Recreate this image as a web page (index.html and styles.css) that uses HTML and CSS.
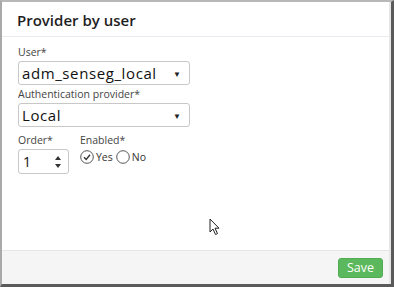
FILE: index.html
```html
<!DOCTYPE html>
<html>
<head>
<meta charset="utf-8">
<link rel="stylesheet" href="styles.css">
</head>
<body>
<div class="frame">
  <div class="modal">
    <div class="header">Provider by user</div>
    <div class="body">
      <div class="field">
        <label class="lbl">User*</label>
        <div class="select wide"><span>adm_senseg_local</span><span class="caret">▼</span></div>
      </div>
      <div class="field">
        <label class="lbl">Authentication provider*</label>
        <div class="select wide"><span>Local</span><span class="caret">▼</span></div>
      </div>
      <div class="row">
        <div class="field">
          <label class="lbl">Order*</label>
          <div class="number"><span>1</span>
            <svg class="spin" width="8" height="14" viewBox="0 0 8 14"><path d="M4 1 L7 5 L1 5 Z M1 9 L7 9 L4 13 Z" fill="#333"/></svg>
          </div>
        </div>
        <div class="field">
          <label class="lbl">Enabled*</label>
          <div class="radios">
            <span class="radio"><svg width="14" height="14" viewBox="0 0 14 14"><circle cx="7" cy="7" r="6.3" fill="none" stroke="#555" stroke-width="1"/><path d="M4 7.2 L6.2 9.4 L10 4.8" fill="none" stroke="#333" stroke-width="1.4"/></svg>Yes</span>
            <span class="radio"><svg width="14" height="14" viewBox="0 0 14 14"><circle cx="7" cy="7" r="6.3" fill="none" stroke="#555" stroke-width="1"/></svg>No</span>
          </div>
        </div>
      </div>
    </div>
    <div class="footer"><button class="save">Save</button></div>
  </div>
  <svg class="cursor" width="12" height="18" viewBox="0 0 12 18"><path d="M1 1 L1 14 L4 11 L6.5 16.5 L8.5 15.6 L6 10.2 L10 10.2 Z" fill="#fff" stroke="#222" stroke-width="1"/></svg>
</div>
</body>
</html>
```
FILE: styles.css
```css
* { box-sizing: border-box; }
html, body { margin: 0; padding: 0; }
body { width: 394px; height: 287px; background: #fff; font-family: "Open Sans", "Noto Sans", sans-serif; color: #222; }
.frame {
  position: relative;
  width: 394px; height: 287px;
  border-left: 2px solid #a9a9a9;
  border-top: 2px solid #b8b8b8;
  border-right: 3px solid #5a5a5a;
  border-bottom: 3px solid #5a5a5a;
}
.modal { display: flex; flex-direction: column; height: 100%; border-right: 2px solid #e6e6e6; }
.header {
  height: 35px; padding: 2px 0 0 15px;
  display: flex; align-items: center;
  font-size: 15px; font-weight: 600; color: #1e1e1e;
  border-bottom: 1px solid #e8ebf0;
}
.body { flex: 1; padding: 8px 16px 0; }
.field { display: flex; flex-direction: column; }
.lbl { font-size: 10.5px; color: #444; line-height: 15px; height: 16px; }
.select {
  height: 24px; border: 1px solid #c8c8c8; border-radius: 3px;
  display: flex; align-items: center; justify-content: space-between;
  padding: 0 8px 0 3px; font-size: 15px; letter-spacing: 0.6px; color: #111; margin-bottom: 2px;
}
.wide { width: 172px; }
.caret { font-size: 8px; color: #222; letter-spacing: 0; }
.row { display: flex; gap: 11px; margin-top: 4px; }
.number {
  width: 51px; height: 25px; border: 1px solid #c8c8c8; border-radius: 3px;
  display: flex; align-items: center; justify-content: space-between;
  padding: 0 6px 0 4px; font-size: 14px; color: #111;
}
.radios { display: flex; align-items: center; gap: 3px; margin-top: 1px; font-size: 10.5px; color: #333; }
.radio { display: flex; align-items: center; gap: 2px; }
.footer {
  height: 34px; background: #f5f5f5; border-top: 1px solid #e6e6e6;
  display: flex; align-items: center; justify-content: flex-end; padding-right: 6px;
}
.save {
  background: #5cb85c; color: #fff; border: 1px solid #52ad52; border-radius: 3px;
  width: 45px; height: 20px; font-family: inherit; font-size: 12.5px; padding: 0;
}
.cursor { position: absolute; left: 207px; top: 216px; }
```
